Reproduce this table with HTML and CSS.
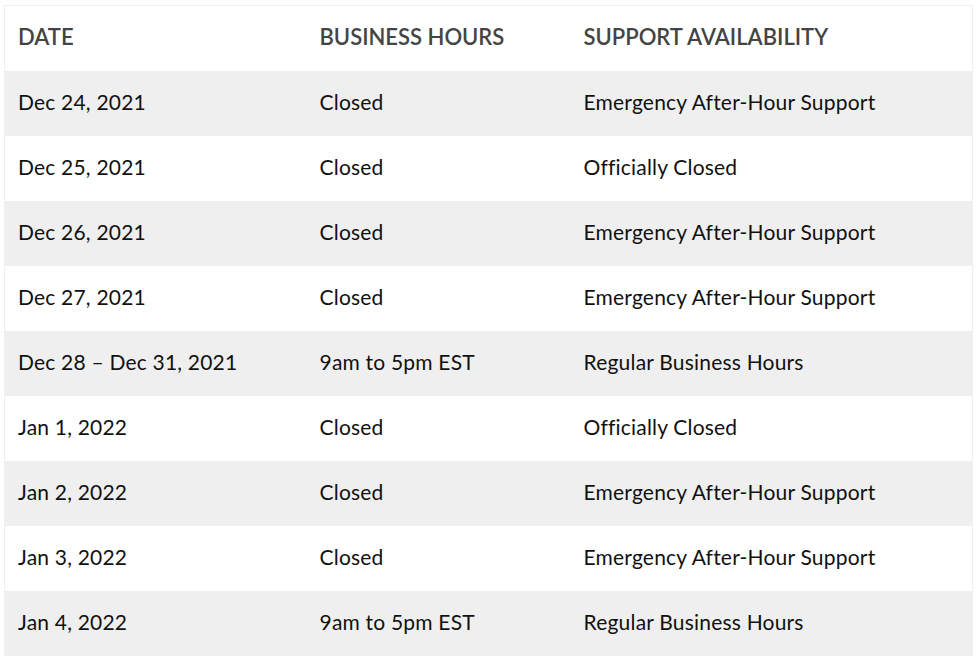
FILE: index.html
```html
<!DOCTYPE html>
<html>
<head>
<meta charset="utf-8">
<link rel="stylesheet" href="styles.css">
</head>
<body>
<table class="hours">
  <thead>
    <tr><th class="c1">DATE</th><th class="c2">BUSINESS HOURS</th><th class="c3">SUPPORT AVAILABILITY</th></tr>
  </thead>
  <tbody>
    <tr><td>Dec 24, 2021</td><td>Closed</td><td>Emergency After-Hour Support</td></tr>
    <tr><td>Dec 25, 2021</td><td>Closed</td><td>Officially Closed</td></tr>
    <tr><td>Dec 26, 2021</td><td>Closed</td><td>Emergency After-Hour Support</td></tr>
    <tr><td>Dec 27, 2021</td><td>Closed</td><td>Emergency After-Hour Support</td></tr>
    <tr><td>Dec 28 – Dec 31, 2021</td><td>9am to 5pm EST</td><td>Regular Business Hours</td></tr>
    <tr><td>Jan 1, 2022</td><td>Closed</td><td>Officially Closed</td></tr>
    <tr><td>Jan 2, 2022</td><td>Closed</td><td>Emergency After-Hour Support</td></tr>
    <tr><td>Jan 3, 2022</td><td>Closed</td><td>Emergency After-Hour Support</td></tr>
    <tr><td>Jan 4, 2022</td><td>9am to 5pm EST</td><td>Regular Business Hours</td></tr>
  </tbody>
</table>
</body>
</html>
```
FILE: styles.css
```css
html, body {
  margin: 0;
  padding: 0;
  background: #fff;
}
body {
  padding: 5px 7px 0 4px;
  font-family: Lato, "Noto Sans", sans-serif;
}
.hours {
  width: 969px;
  border-collapse: collapse;
  border: 1px solid #f0f0f0;
  border-bottom: none;
  table-layout: fixed;
}
.hours th, .hours td {
  height: 65px;
  padding: 0 0 4px 13px;
  text-align: left;
  vertical-align: middle;
  box-sizing: border-box;
  white-space: nowrap;
}
.hours th {
  font-size: 22px;
  font-weight: 600;
  color: #444;
}
.hours td {
  font-size: 21px;
  font-weight: 400;
  letter-spacing: 0.2px;
  color: #111;
}
.c1 { width: 302px; }
.c2 { width: 264px; }
.hours tbody tr:nth-child(odd) {
  background: #efefef;
}
```
